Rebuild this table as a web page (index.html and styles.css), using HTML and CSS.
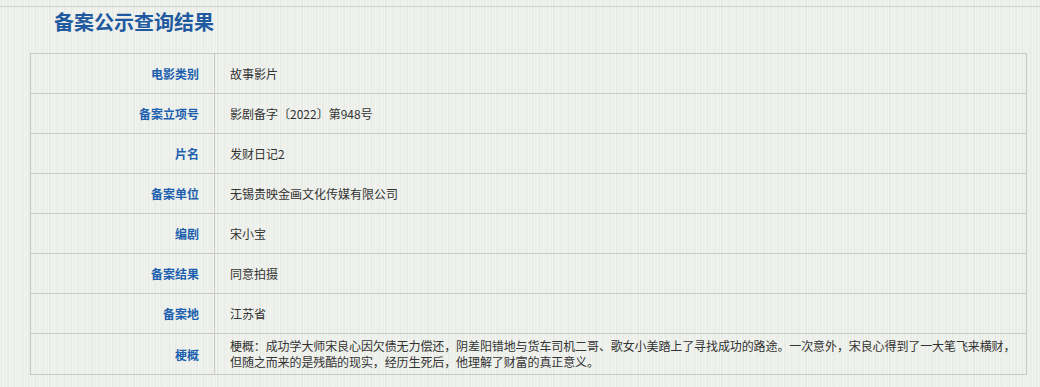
FILE: index.html
```html
<!DOCTYPE html>
<html lang="zh-CN">
<head>
    <meta charset="UTF-8">
    <meta name="viewport" content="width=device-width, initial-scale=1.0">
    <title>备案公示查询结果</title>
    <link rel="stylesheet" href="styles.css">
</head>
<body>

<div class="page">
    <h2 class="page-title">备案公示查询结果</h2>

    <!-- 查询结果表格 -->
    <table class="result-table">
        <tr>
            <th>电影类别</th>
            <td>故事影片</td>
        </tr>
        <tr>
            <th>备案立项号</th>
            <td>影剧备字〔2022〕第948号</td>
        </tr>
        <tr>
            <th>片名</th>
            <td>发财日记2</td>
        </tr>
        <tr>
            <th>备案单位</th>
            <td>无锡贵映金画文化传媒有限公司</td>
        </tr>
        <tr>
            <th>编剧</th>
            <td>宋小宝</td>
        </tr>
        <tr>
            <th>备案结果</th>
            <td>同意拍摄</td>
        </tr>
        <tr>
            <th>备案地</th>
            <td>江苏省</td>
        </tr>
        <tr class="row-summary">
            <th>梗概</th>
            <td>梗概：成功学大师宋良心因欠债无力偿还，阴差阳错地与货车司机二哥、歌女小美踏上了寻找成功的路途。一次意外，宋良心得到了一大笔飞来横财，但随之而来的是残酷的现实，经历生死后，他理解了财富的真正意义。</td>
        </tr>
    </table>
</div>

</body>
</html>
```

FILE: styles.css
```css
body {
    margin: 0;
    font-family: "Noto Sans CJK SC", "Liberation Sans", sans-serif;
    font-size: 12px;
    color: #333333;
    background-color: #edf0ea;
    /* 纸张纹理：细竖纹 */
    background-image:
        repeating-linear-gradient(90deg, rgba(255,255,255,0.25) 0, rgba(255,255,255,0.25) 1px, transparent 1px, transparent 3px),
        repeating-linear-gradient(90deg, rgba(0,0,0,0.015) 0, rgba(0,0,0,0.015) 2px, transparent 2px, transparent 7px);
    height: 387px;
    overflow: hidden;
}

.page {
    margin-top: 6px;
    border-top: 1px solid #cfd1cc;
}

.page-title {
    margin: 0 0 16px 54px;
    font-size: 20px;
    line-height: 30px;
    font-weight: bold;
    color: #1f5aa0;
}

/* 结果表格 */
.result-table {
    margin-left: 30px;
    width: 997px;
    border-collapse: collapse;
    border: 1px solid #c8c9c5;
}

.result-table th,
.result-table td {
    height: 40px;
    border: 1px solid #c8c9c5;
    padding: 0 15px;
    font-size: 12px;
    box-sizing: border-box;
}

.result-table th {
    width: 184px;
    text-align: right;
    font-weight: bold;
    color: #1c5fae;
}

.result-table td {
    text-align: left;
    font-weight: normal;
    color: #333333;
}

.row-summary td {
    line-height: 16px;
    padding: 4px 2px 4px 15px;
    letter-spacing: -0.1px;
}
```
